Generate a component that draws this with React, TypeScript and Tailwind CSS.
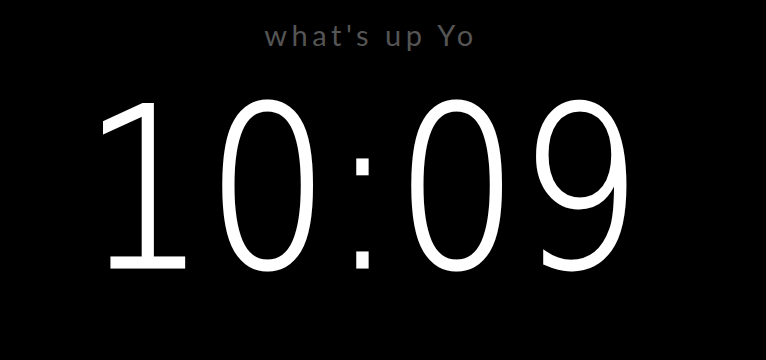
export default function App() {
  return (
    <div className="w-[766px] h-[360px] bg-black overflow-hidden flex flex-col items-center">
      <div className="mt-[18px] pr-[24px] font-['Lato',sans-serif] text-[29px] leading-[34px] tracking-[4.5px] text-[#555555]">
        what's up Yo
      </div>
      <div className="mt-[27px] pr-[48px] font-['DejaVu_Sans',sans-serif] font-extralight text-[223px] leading-[223px] text-white scale-x-[0.87] [-webkit-text-stroke:3px_white]">
        10:09
      </div>
    </div>
  );
}
